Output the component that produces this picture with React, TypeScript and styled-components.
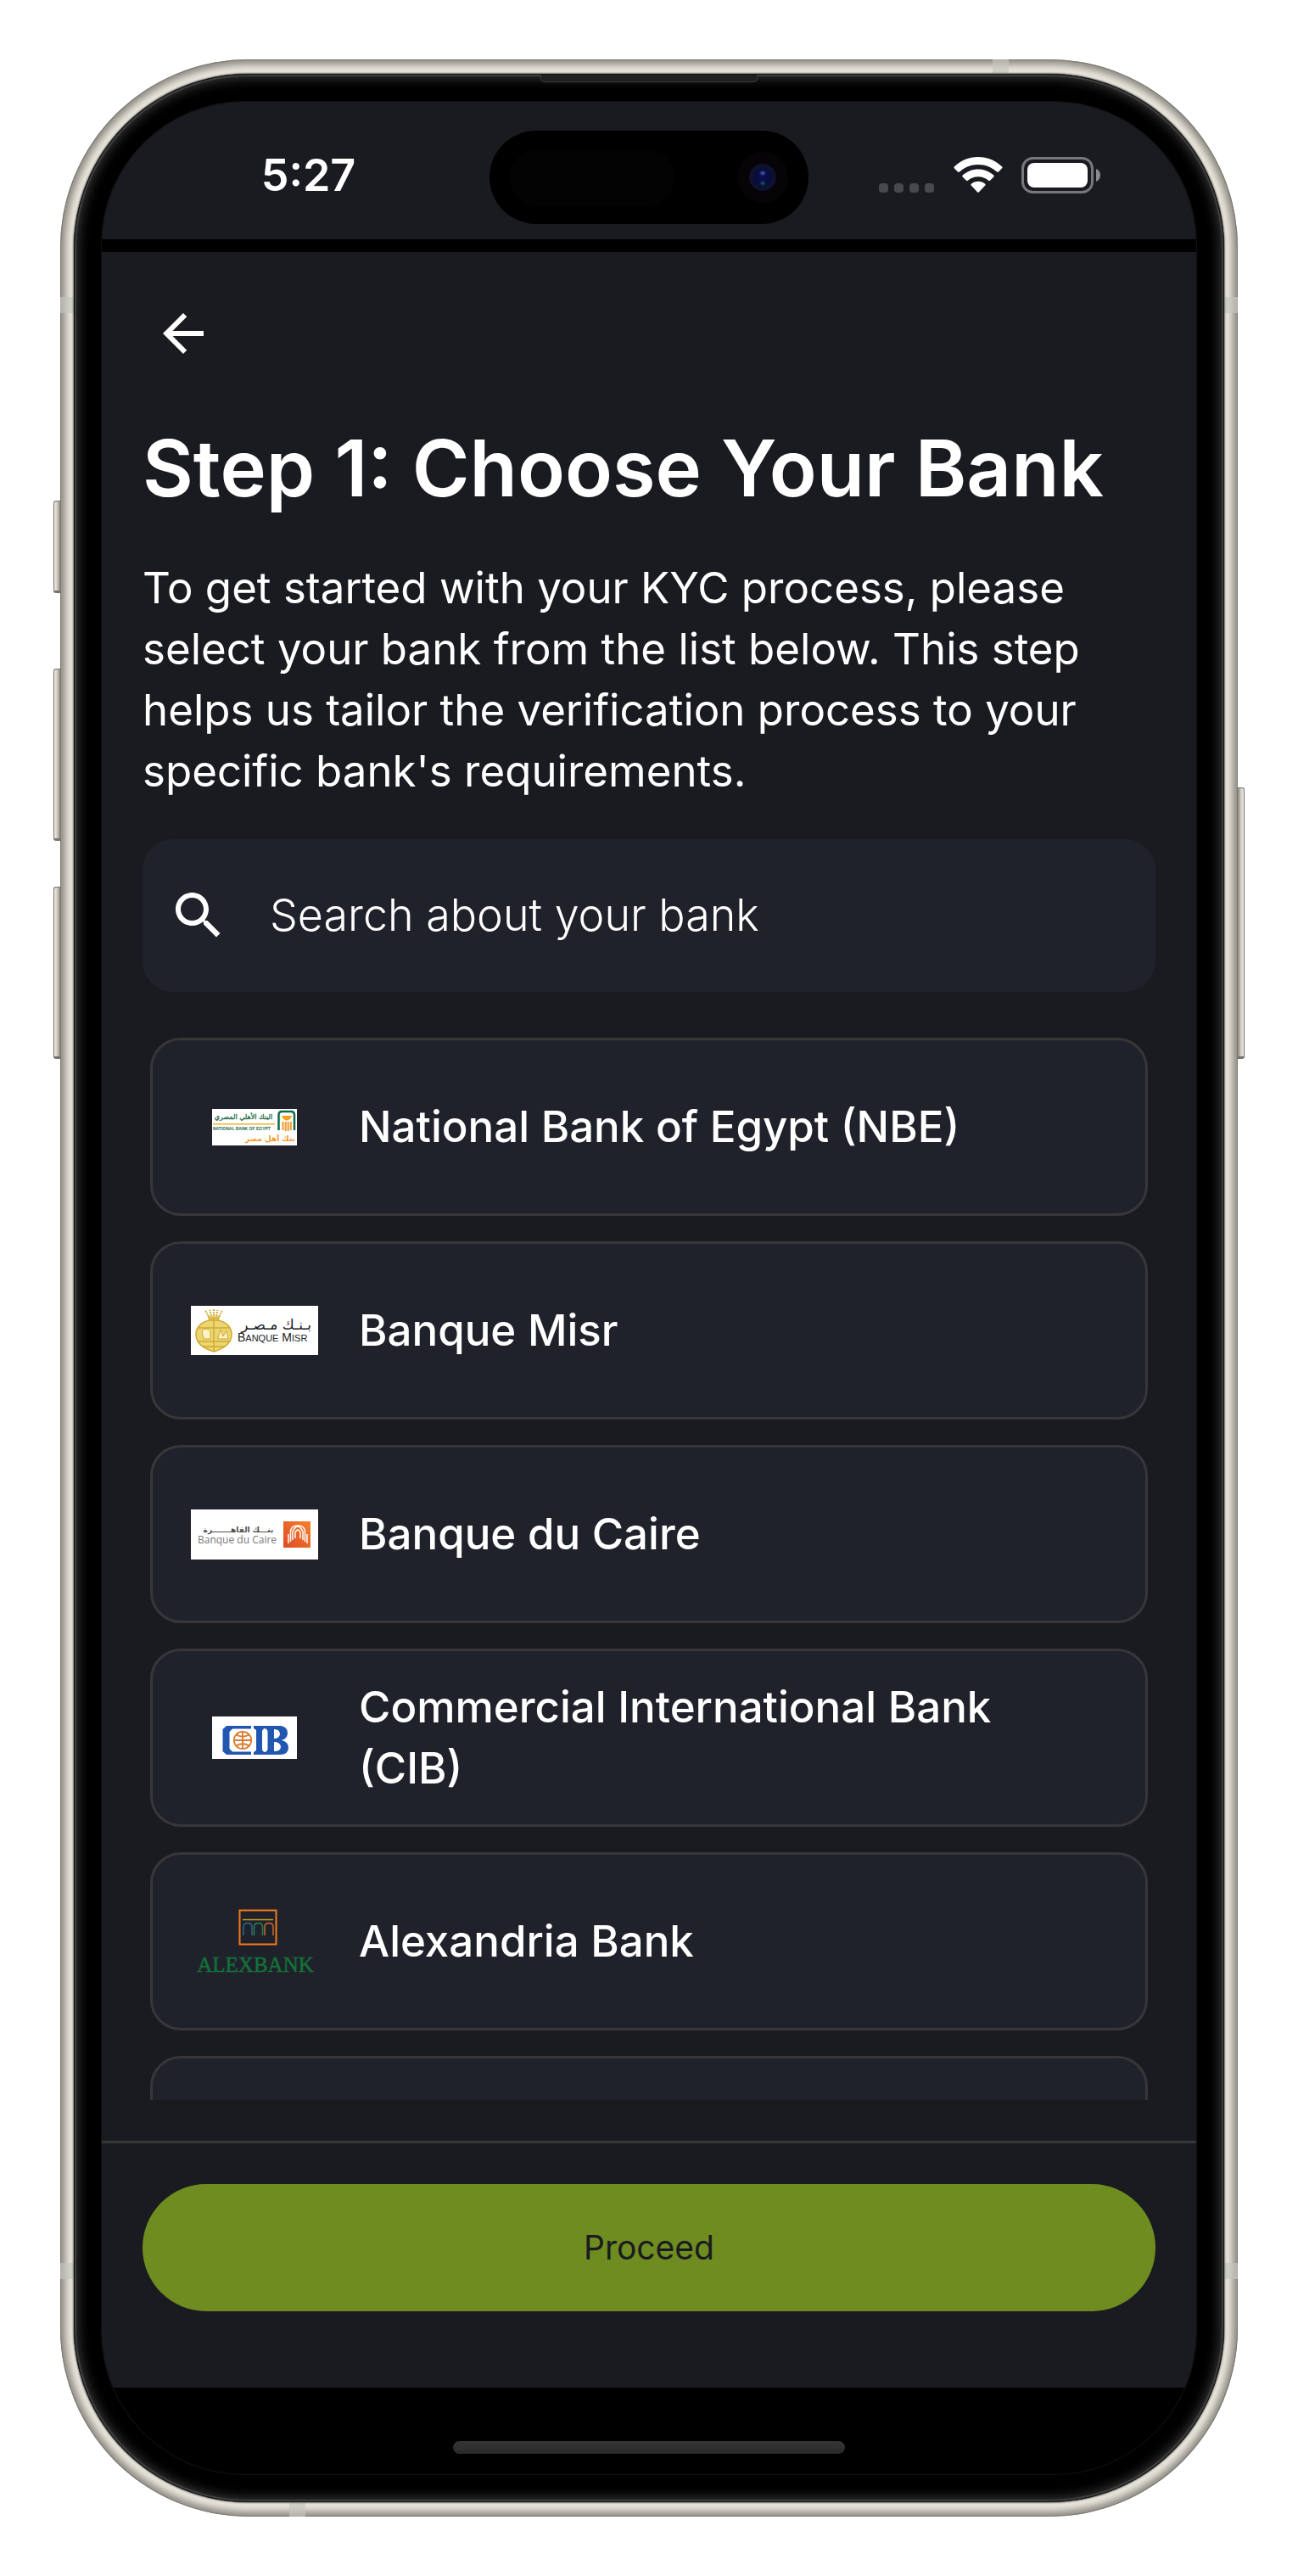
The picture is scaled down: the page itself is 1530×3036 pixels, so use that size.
import React, { useState } from "react";
import styled, { createGlobalStyle } from "styled-components";

const color = {
  surface: "#1a1b20",
  card: "#20222b",
  line: "#37373a",
  text: "#ffffff",
  accent: "#6e8c1f",
};

const GlobalStyle = createGlobalStyle`
  *, *::before, *::after { box-sizing: border-box; }
  body {
    margin: 0;
    background: #ffffff;
    color: ${color.text};
    font-family: Inter, "Liberation Sans", sans-serif;
  }
  button, input { font-family: inherit; }
`;

const Page = styled.div`
  padding: 70px 71px;
`;

const Frame = styled.div`
  position: relative;
  padding: 17px 16px;
  border-radius: 222px;
  background: #e9e6dc;
  box-shadow: inset 0 0 0 1px #7b7972, inset 0 0 9px 6px #8c8982;
`;

const SideKey = styled.span<{ $side: "left" | "right"; $top: number; $length: number }>`
  position: absolute;
  top: ${(p) => p.$top}px;
  ${(p) => p.$side}: -8px;
  width: 8px;
  height: ${(p) => p.$length}px;
  border: 1px solid #77736c;
  border-bottom-width: 3px;
  border-${(p) => (p.$side === "left" ? "right" : "left")}: 0;
  border-radius: ${(p) => (p.$side === "left" ? "3px 0 0 3px" : "0 3px 3px 0")};
  background: linear-gradient(
    to ${(p) => p.$side},
    #858279,
    #cfccc3 50%,
    #efece4
  );
`;

const Antenna = styled.span<{ $edge: "top" | "bottom" | "left" | "right"; $at: number }>`
  position: absolute;
  background: rgba(198, 197, 192, 0.65);
  ${(p) => p.$edge}: 0;
  ${(p) =>
    p.$edge === "left" || p.$edge === "right"
      ? `top: ${p.$at}px; width: 16px; height: 19px;`
      : `left: ${p.$at}px; width: 19px; height: 17px;`}
`;

const Bezel = styled.div`
  position: relative;
  padding: 33px;
  border-radius: 206px;
  background: #000000;
  box-shadow: 0 0 2px 1px #6f6d67, inset 0 0 0 1px #141414, inset 0 0 0 3px #3e3e3e,
    inset 0 0 14px 5px #383838;
`;

const Speaker = styled.span`
  position: absolute;
  top: 1px;
  left: calc(50% - 128px);
  width: 256px;
  height: 9px;
  border: 1px solid #3c3c3c;
  border-top: 0;
  border-radius: 0 0 5px 5px;
  background: #202020;
`;

const Screen = styled.div`
  overflow: hidden;
  border-radius: 168px;
  background: #000000;
  box-shadow: 0 0 0 1px #121212;
`;

const StatusBar = styled.div`
  display: grid;
  grid-template-columns: 1fr 376px 1fr;
  align-items: center;
  height: 162px;
  padding-top: 16px;
  background: ${color.surface};
`;

const Clock = styled.time`
  justify-self: center;
  padding: 0 0 4px 30px;
  font-size: 52px;
  line-height: 60px;
  font-weight: 600;
`;

const Island = styled.div`
  display: flex;
  align-items: center;
  justify-content: space-between;
  height: 110px;
  padding: 0 24px;
  border-radius: 55px;
  background: #000000;
`;

const IslandSensor = styled.span`
  width: 194px;
  height: 66px;
  border-radius: 33px;
  background: #030303;
`;

const StatusIcons = styled.div`
  display: flex;
  align-items: center;
  justify-content: flex-end;
  gap: 22px;
  padding: 0 113px 6px 0;

  svg { display: block; }
`;

const AppBody = styled.main`
  margin-top: 15px;
  padding-top: 60px;
  background: ${color.surface};
`;

const Content = styled.div`
  padding: 0 48px;
`;

const BackButton = styled.button`
  display: block;
  padding: 0 12px;
  border: 0;
  background: none;
  color: inherit;

  svg { display: block; }
`;

const Title = styled.h1`
  margin: 60px 0 42px;
  font-size: 92px;
  line-height: 126px;
  font-weight: 600;
`;

const Intro = styled.p`
  margin: 0 0 44px;
  font-size: 51px;
  line-height: 72px;
  font-weight: 400;
`;

const SearchField = styled.label`
  display: flex;
  align-items: center;
  gap: 48px;
  height: 180px;
  padding: 0 30px;
  border-radius: 36px;
  background: ${color.card};

  svg { flex: none; }
`;

const SearchInput = styled.input`
  flex: 1;
  min-width: 0;
  padding: 0;
  border: 0;
  outline: 0;
  background: none;
  color: ${color.text};
  font-size: 52px;
  line-height: 72px;
  font-weight: 300;

  &::placeholder { color: ${color.text}; opacity: 1; }
`;

const BankList = styled.ul`
  display: flex;
  flex-direction: column;
  gap: 30px;
  height: 1306px;
  margin: 0 0 48px;
  padding: 54px 9px 0;
  overflow: hidden;
  list-style: none;
`;

const BankCard = styled.button`
  display: flex;
  align-items: center;
  gap: 48px;
  width: 100%;
  height: 210px;
  padding: 0 72px 0 45px;
  border: 3px solid ${color.line};
  border-radius: 36px;
  background: ${color.card};
  color: ${color.text};
  text-align: left;
`;

const LogoSlot = styled.span`
  display: flex;
  flex: 0 0 150px;
  justify-content: center;

  svg { display: block; }
`;

const BankName = styled.span`
  font-size: 51px;
  line-height: 72px;
  font-weight: 500;
`;

const Footer = styled.footer`
  padding: 48px 48px 90px;
  border-top: 3px solid ${color.line};
`;

const ProceedButton = styled.button`
  display: block;
  width: 100%;
  height: 150px;
  border: 0;
  border-radius: 75px;
  background: ${color.accent};
  color: ${color.surface};
  font-size: 39px;
  line-height: 60px;
  font-weight: 400;
`;

const HomeArea = styled.div`
  display: flex;
  justify-content: center;
  height: 102px;
  padding-top: 63px;
`;

const HomeIndicator = styled.span`
  width: 462px;
  height: 15px;
  border-radius: 8px;
  background: linear-gradient(#353535, #2a2a2a);
`;

const CameraLens = () => (
  <svg width="60" height="60" viewBox="0 0 60 60" aria-hidden="true">
    <defs>
      <radialGradient id="lens">
        <stop offset="0" stopColor="#0b0f58" />
        <stop offset="0.6" stopColor="#080c3c" />
        <stop offset="1" stopColor="#0c1030" />
      </radialGradient>
      <radialGradient id="glint">
        <stop offset="0" stopColor="#5a6fd0" />
        <stop offset="1" stopColor="#1c2a90" stopOpacity="0" />
      </radialGradient>
      <radialGradient id="glow">
        <stop offset="0" stopColor="#1a6a72" />
        <stop offset="1" stopColor="#10204a" stopOpacity="0" />
      </radialGradient>
    </defs>
    <circle cx="30" cy="30" r="30" fill="#060406" />
    <circle cx="30" cy="30" r="16" fill="#0e1230" />
    <circle cx="30" cy="30" r="12" fill="url(#lens)" />
    <ellipse cx="30" cy="25" rx="5" ry="4" fill="url(#glint)" />
    <ellipse cx="30" cy="37" rx="5" ry="4" fill="url(#glow)" />
  </svg>
);

const SignalIcon = () => (
  <svg width="66" height="43" viewBox="0 0 66 43" aria-label="No signal">
    {[0, 18, 36, 54].map((x) => (
      <rect key={x} x={x} y="31" width="11" height="11" rx="4" fill="#48494d" />
    ))}
  </svg>
);

const WifiIcon = () => (
  <svg width="58" height="43" viewBox="0 0 58 43" aria-label="Wi-Fi">
    <g fill="#ffffff">
      <path d="M29 0C18 0 8 4.300 .8 11.500Q0 12.400 .8 13.300L5 17.600Q6 18.400 6.900 17.600C12.800 12 20.500 8.900 29 8.900S45.200 12 51.100 17.600Q52 18.400 53 17.600L57.200 13.300Q58 12.400 57.200 11.500C50 4.300 40 0 29 0Z" />
      <path d="M29 14.500C21.900 14.500 15.500 17.200 10.700 21.600Q9.800 22.500 10.700 23.400L15 27.800Q15.900 28.600 16.900 27.800C20.100 25 24.400 23.300 29 23.300S37.900 25 41.100 27.800Q42.100 28.600 43 27.800L47.300 23.400Q48.200 22.500 47.300 21.600C42.500 17.200 36.100 14.500 29 14.500Z" />
      <path d="M29 28.800C25.900 28.800 23 29.900 20.800 31.700Q19.900 32.600 20.700 33.500L28 41.200Q29 42.200 30 41.200L37.300 33.500Q38.100 32.600 37.200 31.700C35 29.900 32.100 28.800 29 28.800Z" />
    </g>
  </svg>
);

const BatteryIcon = () => (
  <svg width="93" height="43" viewBox="0 0 93 43" aria-label="Battery full">
    <rect x="1.500" y="1.500" width="82" height="40" rx="12" fill="none" stroke="#77787c" strokeWidth="3" />
    <rect x="7" y="7" width="71" height="29" rx="8" fill="#ffffff" />
    <path d="M88 14C91.500 15.500 93 18.300 93 21.500S91.500 27.500 88 29Z" fill="#8a8b8e" />
  </svg>
);

const ArrowBackIcon = () => (
  <svg width="72" height="72" viewBox="0 0 24 24" fill="currentColor" aria-hidden="true">
    <path d="M20 11H7.830l5.590-5.590L12 4l-8 8 8 8 1.410-1.410L7.830 13H20v-2z" />
  </svg>
);

const SearchIcon = () => (
  <svg width="72" height="72" viewBox="0 0 24 24" fill="currentColor" aria-hidden="true">
    <path d="M15.500 14h-.790l-.280-.270C15.410 12.590 16 11.110 16 9.500 16 5.910 13.090 3 9.500 3S3 5.910 3 9.500 5.910 16 9.500 16c1.610 0 3.090-.590 4.230-1.570l.270.280v.790l5 4.990L20.490 19l-4.990-5zm-6 0C7.010 14 5 11.990 5 9.500S7.010 5 9.500 5 14 7.010 14 9.500 11.990 14 9.500 14z" />
  </svg>
);

const NbeLogo = () => (
  <svg width="100" height="43" viewBox="0 0 100 43" aria-hidden="true">
    <rect width="100" height="43" fill="#ffffff" />
    <text x="37" y="12" textAnchor="middle" fontFamily="DejaVu Sans" fontSize="8" stroke="#1d6b4a" strokeWidth="0.300" fill="#1d6b4a">
      البنك الأهلي المصري
    </text>
    <rect x="1" y="17" width="73" height="1.500" fill="#f0b429" />
    <text x="1" y="24.500" fontFamily="Liberation Sans" fontWeight="700" fontSize="5" fill="#1d6b4a">
      NATIONAL BANK OF EGYPT
    </text>
    <text x="98" y="38" textAnchor="end" fontFamily="DejaVu Sans" fontWeight="700" fontSize="9" fill="#f39a2e">
      بنك أهل مصر
    </text>
    <path d="M78.500 25V7Q78.500 3 82.500 3H93Q97 3 97 7V25" fill="none" stroke="#0d6b45" strokeWidth="2.500" />
    <path d="M82 8H94Q93 12 89 13.500H87Q83 12 82 8Z" fill="#f2a21c" />
    <path d="M83.500 15V25M86.700 15V26M89.700 15V26M92.800 15V25" stroke="#f39a2e" strokeWidth="2" />
  </svg>
);

const BanqueMisrLogo = () => (
  <svg width="150" height="58" viewBox="0 0 150 58" aria-hidden="true">
    <rect width="150" height="58" fill="#ffffff" />
    <g fill="none" stroke="#cfa92c">
      <path d="M21 13C19 9 18 7 17 6M24 12L22.500 5M27 12V4M30 12L31.500 5M33 13C35 9 36 7 37 6" strokeWidth="2" strokeDasharray="2 1" />
      <rect x="21" y="13" width="12" height="3" fill="#e3c24a" />
      <path d="M23 17C12 18 6 26 6 34 6 44 14 50 27 54 40 50 48 44 48 34 48 26 42 18 31 17Z" fill="#ecd573" strokeWidth="1.500" />
      <path d="M27 16V54M9 26H45M8 42H46M13 48H41" strokeWidth="1.500" />
      <path d="M13 30Q18 24 23 30V39H15ZM32 38L35 28 38 36 42 29 44 39H31Z" fill="#fbf3c8" />
    </g>
    <text x="142" y="28" textAnchor="end" fontFamily="DejaVu Sans" fontSize="17" fill="#222222">
      بـنـك مـصـر
    </text>
    <text x="55" y="42" fontFamily="Liberation Sans" fontSize="14" fill="#222222">
      B<tspan fontSize="11">ANQUE</tspan> M<tspan fontSize="11">ISR</tspan>
    </text>
  </svg>
);

const BanqueDuCaireLogo = () => (
  <svg width="150" height="59" viewBox="0 0 150 59" aria-hidden="true">
    <defs>
      <linearGradient id="caire" x1="0" y1="1" x2="1" y2="0">
        <stop offset="0" stopColor="#df4a26" />
        <stop offset="1" stopColor="#f3812c" />
      </linearGradient>
    </defs>
    <rect width="150" height="59" fill="#ffffff" />
    <text x="56" y="27" textAnchor="middle" fontFamily="DejaVu Sans" fontWeight="700" fontSize="9" fill="#4a4a4c">
      بنـــك القاهـــــــرة
    </text>
    <text x="8" y="40" fontFamily="Open Sans" fontSize="12" fill="#77777a">
      Banque du Caire
    </text>
    <rect x="109" y="14" width="32" height="31" fill="url(#caire)" />
    <g fill="none" stroke="#ffffff" strokeWidth="1.500">
      <path d="M123 34V27Q126 21 129 27V34M120 36V26Q126 14 132 26V36M117.500 38V25Q119 19 126 19 133 19 134.500 25V38M115 40V29M137 40V29" />
    </g>
  </svg>
);

const CibLogo = () => (
  <svg width="100" height="50" viewBox="0 0 100 50" aria-hidden="true">
    <rect width="100" height="50" fill="#ffffff" />
    <path d="M46 11H17L12.500 15V41L17 45H46V41.500H24L20.500 38V18L24 14.500H46Z" fill="#2157b0" />
    <path fillRule="evenodd" d="M49 11H81Q89 12 89 19.500 89 26 82 28 90 30 90 37 90 44 81 45H49V42L52 40V16L49 14ZM62 14Q59 15 59 18V38Q59 41 62 42 65.500 41 65.500 38V18Q65.500 15 62 14ZM73 15V26Q79 26 80 21 80 15 73 15ZM73 30V41Q81 41 81 35.500 80 30 73 30Z" fill="#2157b0" />
    <g fill="none" stroke="#dc7a2d" strokeWidth="1.800">
      <circle cx="36" cy="28" r="10.200" />
      <path d="M36 18V38M26 28H46M28.500 21.500Q36 26 43.500 21.500M28.500 34.500Q36 30 43.500 34.500" />
    </g>
  </svg>
);

const AlexBankLogo = () => (
  <svg width="150" height="84" viewBox="0 -4 150 84" aria-hidden="true">
    <g fill="none">
      <rect x="57.500" y="1.500" width="43" height="40" stroke="#f27a1a" strokeWidth="2" />
      <path d="M61 12.500H97" stroke="#c9a227" strokeWidth="1.500" />
      <path d="M62 31V21Q62 16.500 67 16.500T72 21V31" stroke="#26698f" strokeWidth="1.500" />
      <path d="M74.500 31V21Q74.500 16.500 79.500 16.500T84.500 21V31" stroke="#26814e" strokeWidth="1.500" />
      <path d="M87 31V21Q87 16.500 92 16.500T97 21V31" stroke="#c86a2c" strokeWidth="1.500" />
    </g>
    <text x="76" y="74" textAnchor="middle" fontFamily="Liberation Serif" fontSize="25" stroke="#14713a" strokeWidth="0.500" fill="#14713a">
      ALEXBANK
    </text>
  </svg>
);

const banks = [
  { name: "National Bank of Egypt (NBE)", Logo: NbeLogo },
  { name: "Banque Misr", Logo: BanqueMisrLogo },
  { name: "Banque du Caire", Logo: BanqueDuCaireLogo },
  { name: "Commercial International Bank (CIB)", Logo: CibLogo },
  { name: "Alexandria Bank", Logo: AlexBankLogo },
  { name: "", Logo: null },
];

export default function App() {
  const [query, setQuery] = useState("");
  const visible = banks.filter((b) => b.name.toLowerCase().includes(query.toLowerCase()));

  return (
    <Page>
      <GlobalStyle />
      <Frame>
        <SideKey $side="left" $top={520} $length={109} />
        <SideKey $side="left" $top={718} $length={203} />
        <SideKey $side="left" $top={975} $length={203} />
        <SideKey $side="right" $top={858} $length={320} />
        <Antenna $edge="top" $at={1099} />
        <Antenna $edge="bottom" $at={270} />
        <Antenna $edge="left" $at={280} />
        <Antenna $edge="right" $at={280} />
        <Antenna $edge="left" $at={2597} />
        <Antenna $edge="right" $at={2597} />
        <Bezel>
          <Speaker />
          <Screen>
            <StatusBar>
              <Clock>5:27</Clock>
              <Island>
                <IslandSensor />
                <CameraLens />
              </Island>
              <StatusIcons>
                <SignalIcon />
                <WifiIcon />
                <BatteryIcon />
              </StatusIcons>
            </StatusBar>
            <AppBody>
              <Content>
                <BackButton type="button" aria-label="Back">
                  <ArrowBackIcon />
                </BackButton>
                <Title>Step 1: Choose Your Bank</Title>
                <Intro>
                  To get started with your KYC process, please select your bank from the list below.
                  This step helps us tailor the verification process to your specific bank's
                  requirements.
                </Intro>
                <SearchField>
                  <SearchIcon />
                  <SearchInput
                    type="text"
                    aria-label="Search about your bank"
                    placeholder="Search about your bank"
                    value={query}
                    onChange={(e) => setQuery(e.target.value)}
                  />
                </SearchField>
                <BankList>
                  {visible.map(({ name, Logo }) => (
                    <li key={name}>
                      <BankCard type="button">
                        <LogoSlot>{Logo && <Logo />}</LogoSlot>
                        <BankName>{name}</BankName>
                      </BankCard>
                    </li>
                  ))}
                </BankList>
              </Content>
              <Footer>
                <ProceedButton type="button">Proceed</ProceedButton>
              </Footer>
            </AppBody>
            <HomeArea>
              <HomeIndicator />
            </HomeArea>
          </Screen>
        </Bezel>
      </Frame>
    </Page>
  );
}
